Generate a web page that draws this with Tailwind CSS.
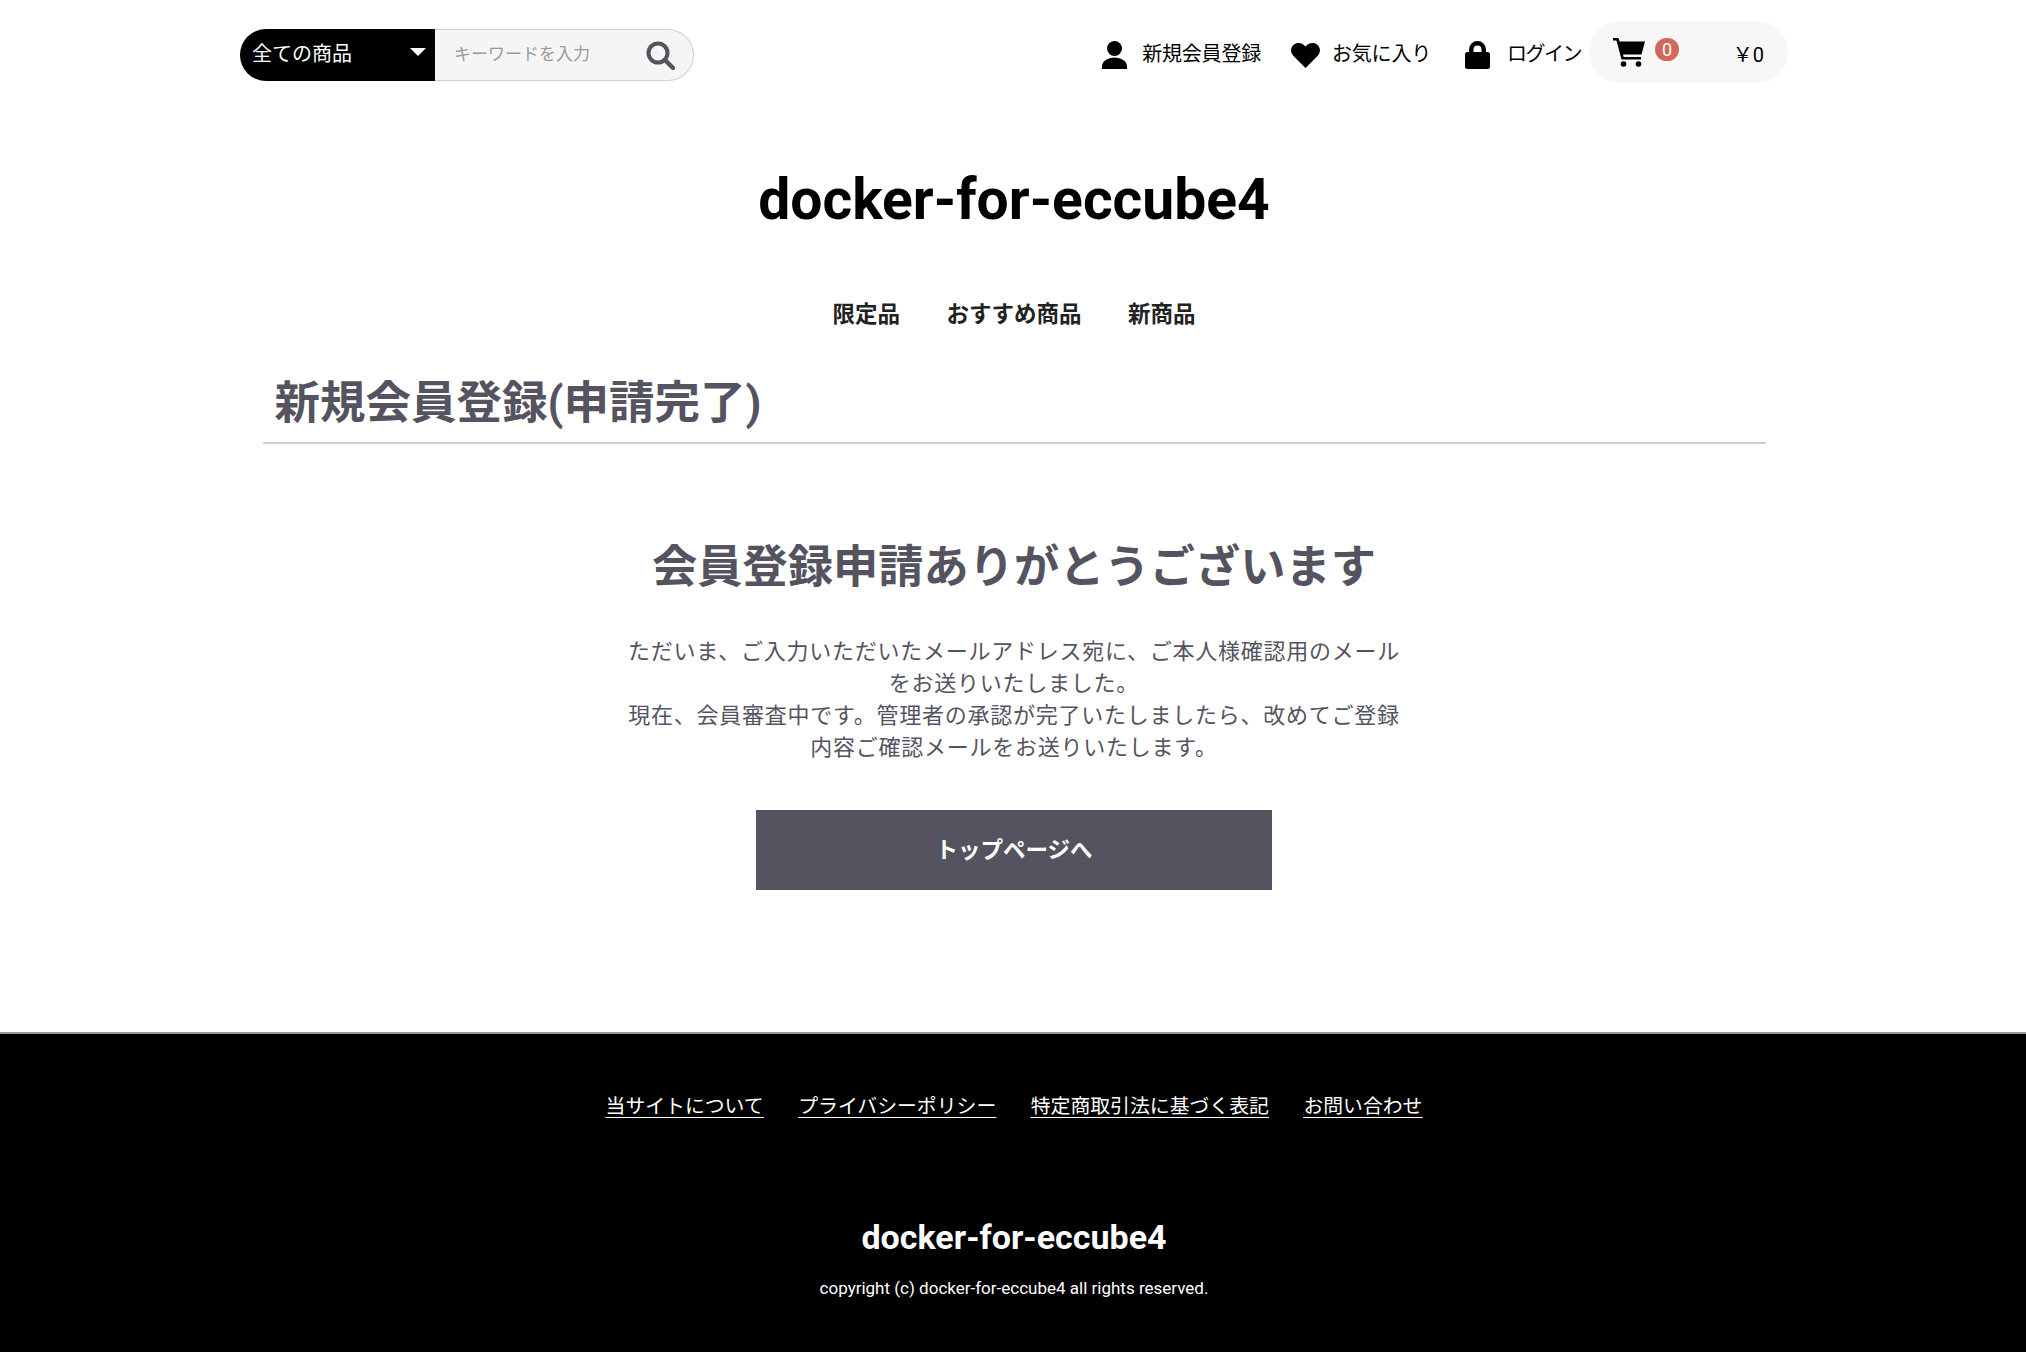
<!DOCTYPE html>
<html lang="ja">
<head>
    <meta charset="UTF-8">
    <meta name="viewport" content="width=device-width, initial-scale=1.0">
    <title>新規会員登録(申請完了)</title>
    <script src="https://cdn.jsdelivr.net/npm/@tailwindcss/browser@4"></script>
</head>
<body class="bg-white font-['Roboto','Noto_Sans_CJK_JP',sans-serif] text-black min-h-screen flex flex-col">
    <div class="flex-1 pl-[2px]">
        <!-- Header: search and user links -->
        <div class="w-[1548px] mx-auto h-[104px] flex items-start justify-between">
            <div class="flex mt-[29px] h-[52px]">
                <div class="w-[195px] bg-black text-white rounded-l-[26px] flex items-center justify-between pl-3 pr-2 text-[20px] pb-[2px]">
                    <span>全ての商品</span>
                    <span class="w-0 h-0 -mt-[5px] -ml-1 mr-[1px] border-x-[8px] border-x-transparent border-t-[8px] border-t-white"></span>
                </div>
                <div class="w-[259px] bg-[#f5f5f5] border border-l-0 border-[#d0d0d0] rounded-r-[26px] flex items-center justify-between pl-[19px] pr-[18px]">
                    <span class="text-[17px] text-[#9a9a9a]">キーワードを入力</span>
                    <svg class="w-[29px] h-[29px]" viewBox="0 0 29 29" fill="none" stroke="#54535f"><circle cx="12" cy="12" r="9.500" stroke-width="4"/><path d="M19 19l8 8" stroke-width="4.500" stroke-linecap="round"/></svg>
                </div>
            </div>
            <div class="flex items-center mt-[21px] h-[62px]">
                <a class="flex items-center text-[20px] mr-[30px] pt-[6px]">
                    <svg class="w-[25px] h-[28px] mr-[15px]" viewBox="0 0 25 28" fill="#000"><circle cx="12.500" cy="7.500" r="7.500"/><path d="M0 28v-2.500C0 20 6 16.500 12.500 16.500S25 20 25 25.500V28z"/></svg>
                    <span class="-mt-[2px] tracking-[-0.2px]">新規会員登録</span>
                </a>
                <a class="flex items-center text-[20px] mr-[34px] pt-[6px]">
                    <svg class="w-[29px] h-[25px] mr-[12px]" viewBox="0 0 29 25" fill="#000"><path d="M14.500 25L2.500 13C-1 9.500-.5 4.500 2.500 2c3.500-3 8.500-2.500 12 1.500 3.500-4 8.500-4.500 12-1.500 3 2.500 3.500 7.500 0 11z"/></svg>
                    <span class="-mt-[2px] tracking-[-0.2px]">お気に入り</span>
                </a>
                <a class="flex items-center text-[20px] mr-[8px] pt-[6px]">
                    <svg class="w-[25px] h-[28px] mr-[17px]" viewBox="0 0 25 28" fill="#000"><path d="M4 11V8.500a8.500 8.500 0 0 1 17 0V11h1.500a2.500 2.500 0 0 1 2.500 2.500v12a2.500 2.500 0 0 1-2.500 2.500h-20A2.500 2.500 0 0 1 0 25.500v-12A2.500 2.500 0 0 1 2.500 11zm4.500 0h8V8.500a4 4 0 0 0-8 0z"/></svg>
                    <span class="-mt-[2px] tracking-[-1.5px]">ログイン</span>
                </a>
                <div class="relative w-[199px] h-[62px] rounded-[31px] bg-[#f7f7f7] flex items-center justify-between pl-[24px] pr-[24px]">
                    <svg class="w-[32px] h-[29px]" viewBox="0 0 32 29" fill="#000"><path d="M0 0h5.500l1 3.500H32l-3.500 13H10l.7 2.500H28v2.500H8.500L3.500 2.500H0z"/><circle cx="10.500" cy="26" r="2.800"/><circle cx="25.500" cy="26" r="2.800"/></svg>
                    <span class="absolute left-[66px] top-[17px] w-[24px] h-[23px] rounded-full bg-[#d1695a] text-white text-[18px] leading-[23px] text-center">0</span>
                    <span class="text-[20px] pt-[5px]">￥0</span>
                </div>
            </div>
        </div>

        <!-- Logo and category nav -->
        <div class="text-center mt-[60px]">
            <h1 class="text-[57px] leading-[72px] font-bold">docker-for-eccube4</h1>
        </div>
        <div class="flex justify-center gap-[46.500px] mt-[62px] text-[22.500px] leading-[32px] font-bold text-[#222]">
            <a>限定品</a>
            <a>おすすめ商品</a>
            <a>新商品</a>
        </div>

        <!-- Page title -->
        <div class="w-[1503px] mx-auto mt-[44px] border-b-2 border-[#cfcfcf] px-3 pb-[8px]">
            <h2 class="text-[45.500px] leading-[60px] font-bold text-[#54535f]">新規会員登録(申請完了)</h2>
        </div>

        <!-- Completion message -->
        <div class="w-[782px] mx-auto mt-[94px] text-center text-[#54535f]">
            <h3 class="text-[45.250px] leading-[60px] font-bold whitespace-nowrap">会員登録申請ありがとうございます</h3>
            <p class="mt-[38px] text-[22px] leading-[32px] tracking-[0.75px]">ただいま、ご入力いただいたメールアドレス宛に、ご本人様確認用のメールをお送りいたしました。<br>現在、会員審査中です。管理者の承認が完了いたしましたら、改めてご登録内容ご確認メールをお送りいたします。</p>
            <a class="block w-[516px] h-[80px] mx-auto mt-[46px] bg-[#54535f] text-white text-[22.500px] font-bold leading-[80px]">トップページへ</a>
        </div>
    </div>

    <!-- Footer -->
    <div class="h-[320px] bg-black border-t-2 border-[#999] text-white text-center pl-[2px]">
        <div class="flex justify-center gap-[34.500px] mt-[58px] text-[19.850px] leading-[30px] underline underline-offset-4">
            <a>当サイトについて</a>
            <a>プライバシーポリシー</a>
            <a>特定商取引法に基づく表記</a>
            <a>お問い合わせ</a>
        </div>
        <div class="mt-[91px] text-[34px] leading-[48px] font-bold">docker-for-eccube4</div>
        <div class="mt-[15px] text-[17px] leading-[24px]">copyright (c) docker-for-eccube4 all rights reserved.</div>
    </div>
</body>
</html>
